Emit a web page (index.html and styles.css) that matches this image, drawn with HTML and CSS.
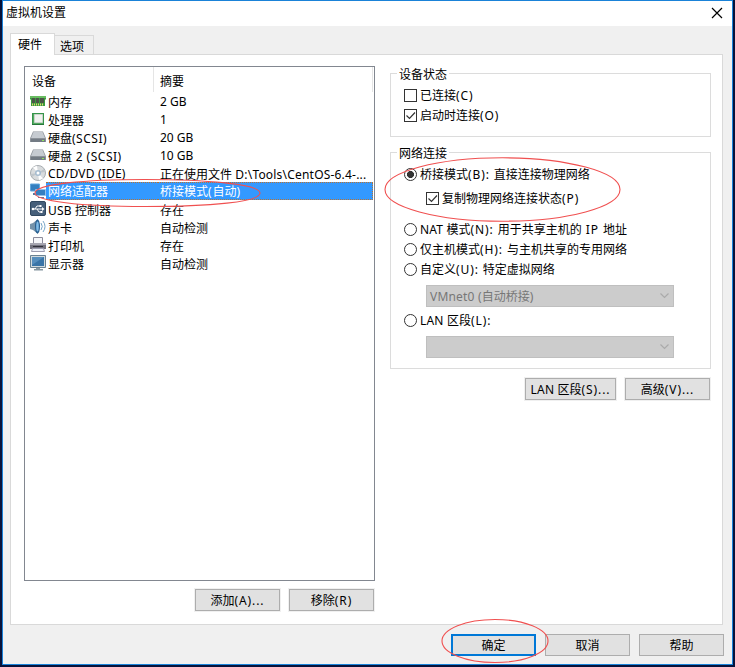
FILE: index.html
```html
<!DOCTYPE html>
<html lang="zh-CN">
<head>
<meta charset="utf-8">
<title>虚拟机设置</title>
<link rel="stylesheet" href="styles.css">
</head>
<body>
<div class="window">
  <header class="titlebar">
    <span class="title">虚拟机设置</span>
    <svg class="close" width="12" height="12" viewBox="0 0 12 12"><path d="M1 1l10 10M11 1L1 11" stroke="#000" stroke-width="1.2" fill="none"/></svg>
  </header>
  <nav class="tabs">
    <div class="tab active">硬件</div>
    <div class="tab">选项</div>
  </nav>
  <main class="panel">
    <section class="left">
      <div class="list">
        <div class="head"><span class="c1">设备</span><span class="c2">摘要</span></div>
        <div class="row">
          <svg class="ico" viewBox="0 0 16 16"><path d="M0 3h16v3l-1 1v6H1V7L0 6z" fill="#3a9a3e"/><path d="M0 3h16v2H0z" fill="#69bd61"/><path d="M2 5h3v5H2zM6 5h3v5H6zM10 5h4v5h-4z" fill="#4c5549"/><path d="M2 11.500h12" stroke="#e6d375" stroke-width="2" stroke-dasharray="1 1"/></svg>
          <span class="c1">内存</span><span class="c2 latin">2 GB</span></div>
        <div class="row">
          <svg class="ico" viewBox="0 0 16 16"><path d="M2 2h12v12H2z" fill="#35944a"/><path d="M3 3h10v10H3z" fill="#55aa63"/><path d="M4.500 3.500h8v8h-8z" fill="#f0f1f0" stroke="#c9d5ca"/><path d="M2 13.500h12" stroke="#27753a"/></svg>
          <span class="c1">处理器</span><span class="c2 latin">1</span></div>
        <div class="row">
          <svg class="ico" viewBox="0 0 16 16"><path d="M3 2.500h10l3 7v3.500H0V9.500z" fill="#8c9299"/><path d="M3.500 3h9L15 9H1z" fill="#c6cbd1"/><path d="M1 10h14v3H1z" fill="#737b84"/><path d="M12 11h2v1h-2z" fill="#8ee35b"/></svg>
          <span class="c1">硬盘<span class="en mid">(SCSI)</span></span><span class="c2 latin">20 GB</span></div>
        <div class="row">
          <svg class="ico" viewBox="0 0 16 16"><path d="M3 2.500h10l3 7v3.500H0V9.500z" fill="#8c9299"/><path d="M3.500 3h9L15 9H1z" fill="#c6cbd1"/><path d="M1 10h14v3H1z" fill="#737b84"/><path d="M12 11h2v1h-2z" fill="#8ee35b"/></svg>
          <span class="c1">硬盘<span class="en mid"> 2 (SCSI)</span></span><span class="c2 latin">10 GB</span></div>
        <div class="row">
          <svg class="ico" viewBox="0 0 16 16"><circle cx="8" cy="8" r="7.500" fill="#d9dcde" stroke="#a8adb1"/><path d="M8 8L3 2.500A7 7 0 0 1 7 1zM8 8l5 5.500A7 7 0 0 1 9 15z" fill="#fff"/><path d="M8 8l6-4a7 7 0 0 1 1 3zM8 8l-6 4a7 7 0 0 1-1-3z" fill="#bfc6cb"/><circle cx="8" cy="8" r="3" fill="#a5bcd0"/><circle cx="8" cy="8" r="1.500" fill="#fff"/></svg>
          <span class="c1 latin"><span class="en tight">CD/DVD (IDE)</span></span><span class="c2">正在使用文件<span class="en tight"> D:\Tools\CentOS-6.4-...</span></span></div>
        <div class="row selected">
          <svg class="ico" viewBox="0 0 16 16"><path d="M.5 1h9v7h-9z" fill="#347fc0" stroke="#62a7dc"/><path d="M3 10h5v2H3z" fill="#517ba5"/><path d="M5.500 6.500h10v6h-10z" fill="#347fc0" stroke="#94c2e8"/><path d="M8 14h6v1H8z" fill="#517ba5"/></svg>
          <span class="c1">网络适配器</span><span class="c2">桥接模式<span class="en">(</span>自动<span class="en">)</span></span></div>
        <div class="row">
          <svg class="ico" viewBox="0 0 16 16"><rect x=".5" y=".5" width="15" height="14" rx="1.500" fill="#465f7a" stroke="#30475f"/><path d="M3 8h10M5 8l2-3h3M7 8l2 3h2" stroke="#fff" fill="none"/><circle cx="3" cy="8" r="1.300" fill="#fff"/><path d="M9.500 4h2v2h-2zM10.500 10h2v2h-2zM12 6l2.500 2L12 10z" fill="#fff"/></svg>
          <span class="c1"><span class="en tight">USB </span>控制器</span><span class="c2">存在</span></div>
        <div class="row">
          <svg class="ico" viewBox="0 0 16 16"><path d="M0 5l3-1 5-4v15l-5-4-3-1z" fill="#7593aa"/><ellipse cx="7.500" cy="7.500" rx="2.500" ry="7" fill="#275f91"/><ellipse cx="7.500" cy="7.500" rx="1.300" ry="5" fill="#80bde8"/><path d="M11 4q2.500 3.500 0 7M13 2q4 5.500 0 11" fill="none" stroke="#76a6c8"/></svg>
          <span class="c1">声卡</span><span class="c2">自动检测</span></div>
        <div class="row">
          <svg class="ico" viewBox="0 0 16 16"><path d="M3.500.5h9V7h-9z" fill="#f6f7fa" stroke="#8c8c9b"/><path d="M0 6h16v6H0z" fill="#73737f"/><path d="M0 6h16v2H0z" fill="#a6a6b1"/><path d="M3 9h10v1H3z" fill="#30303b"/><path d="M2.500 11.500h11l1 3h-13z" fill="#eef2fa" stroke="#9c9caf"/></svg>
          <span class="c1">打印机</span><span class="c2">存在</span></div>
        <div class="row">
          <svg class="ico" viewBox="0 0 16 16"><path d="M.5.500h15v12H.5z" fill="#d2dadd" stroke="#6a8292"/><path d="M2 2h12v9H2z" fill="#3974a7"/><path d="M2 2h12L2 10z" fill="#568ebd"/><path d="M6 13h4v1H6z" fill="#8d9ca5"/><path d="M4 14h9v1.500H4z" fill="#8797a0"/></svg>
          <span class="c1">显示器</span><span class="c2">自动检测</span></div>
      </div>
      <div class="buttons"><button><span>添加<span class="en">(A)...</span></span></button><button><span>移除<span class="en">(R)</span></span></button></div>
    </section>
    <section class="right">
      <div class="group status">
        <span class="legend">设备状态</span>
        <label class="opt"><i class="box"></i><span>已连接<span class="en">(C)</span></span></label>
        <label class="opt"><i class="box"><svg viewBox="0 0 11 11"><path d="M1.500 5.500l3 3L10 2.500"/></svg></i><span>启动时连接<span class="en">(O)</span></span></label>
      </div>
      <div class="group network">
        <span class="legend">网络连接</span>
        <label class="opt"><i class="radio on"></i><span>桥接模式<span class="en">(B): </span>直接连接物理网络</span></label>
        <label class="opt nested"><i class="box"><svg viewBox="0 0 11 11"><path d="M1.500 5.500l3 3L10 2.500"/></svg></i><span>复制物理网络连接状态<span class="en">(P)</span></span></label>
        <label class="opt"><i class="radio"></i><span><span class="en tight">NAT </span>模式<span class="en">(N): </span>用于共享主机的<span class="en"> IP </span>地址</span></label>
        <label class="opt"><i class="radio"></i><span>仅主机模式<span class="en">(H): </span>与主机共享的专用网络</span></label>
        <label class="opt"><i class="radio"></i><span>自定义<span class="en">(U): </span>特定虚拟网络</span></label>
        <div class="select"><span><span class="en tight">VMnet0 (</span>自动桥接<span class="en">)</span></span><svg width="9" height="6" viewBox="0 0 9 6"><path d="M.5.500l4 4 4-4"/></svg></div>
        <label class="opt lan"><i class="radio"></i><span><span class="en tight">LAN </span>区段<span class="en">(L):</span></span></label>
        <div class="select"><span></span><svg width="9" height="6" viewBox="0 0 9 6"><path d="M.5.500l4 4 4-4"/></svg></div>
      </div>
      <div class="buttons"><button class="wide"><span><span class="en tight">LAN </span>区段<span class="en">(S)...</span></span></button><button><span>高级<span class="en">(V)...</span></span></button></div>
    </section>
  </main>
  <footer class="footer"><button class="primary"><span>确定</span></button><button><span>取消</span></button><button><span>帮助</span></button></footer>
</div>
<svg class="marks" width="735" height="667" viewBox="0 0 735 667">
  <path d="M35 193C35 184 85 179.500 145 179.500S260 184 260 193 210 206.500 145 206.500 35 201 35 193z"/>
  <ellipse cx="502.500" cy="189.500" rx="117.500" ry="31.700"/>
  <ellipse cx="495" cy="641" rx="53" ry="21.500"/>
</svg>
</body>
</html>
```

FILE: styles.css
```css
* { box-sizing: border-box; }
body {
  margin: 0;
  width: 735px;
  height: 667px;
  overflow: hidden;
  background: #07123a;
  padding: 0 2px 2px;
  font: 12px/18px "Noto Sans", "Noto Sans CJK SC", sans-serif;
  color: #000;
}
.en { letter-spacing: .9px; white-space: pre; }
.en.mid { letter-spacing: .5px; }
.en.tight { letter-spacing: .2px; }
.window {
  width: 731px;
  height: 665px;
  border: 1px solid #1a82d8;
  background: #f0f0f0;
  display: flex;
  flex-direction: column;
}
.titlebar {
  height: 25px;
  background: #fff;
  display: flex;
  align-items: center;
  justify-content: space-between;
  padding: 0 9px 0 3px;
}
.title { margin-top: -1px; }
.close { display: block; margin-top: -1px; }
.tabs {
  height: 28px;
  padding: 0 7px;
  display: flex;
  align-items: flex-end;
}
.tab {
  height: 19px;
  width: 39px;
  border: 1px solid #d9d9d9;
  border-width: 1px 1px 0 0;
  padding-left: 5px;
  line-height: 21px;
}
.tab.active {
  height: 22px;
  width: 45px;
  margin-bottom: -1px;
  border-left-width: 1px;
  background: #fff;
  padding-left: 7px;
  line-height: 22px;
  z-index: 1;
}
.panel {
  height: 571px;
  width: 713px;
  margin-left: 7px;
  border: 1px solid #d9d9d9;
  background: #fff;
  display: flex;
  gap: 15px;
  padding: 11px 11px 0 13px;
}
.left { width: 351px; }
.list {
  height: 515px;
  border: 1px solid #828790;
  padding: 0 1px;
}
.head {
  height: 25px;
  display: flex;
  line-height: 30px;
}
.head .c1 {
  width: 128px;
  padding-left: 6px;
  border-right: 1px solid #e5e5e5;
}
.head .c2 { flex: 1; padding-left: 6px; border-right: 1px solid #e5e5e5; }
.row {
  height: 18px;
  padding-left: 4px;
  display: flex;
  line-height: 21px;
  white-space: nowrap;
}
.row .latin { line-height: 19px; }
.ico { width: 16px; height: 16px; flex: none; margin-top: 1px; }
.row .c1 { width: 112px; padding-left: 2px; flex: none; }
.row .c2 { flex: 1; padding-left: 2px; }
.row.selected .c1, .row.selected .c2 {
  background: #3399ff;
  color: #fff;
  border: 1px dotted #b87333;
  border-width: 1px 0;
  line-height: 18px;
}
.row.selected .c2 { border-right-width: 1px; }
.buttons {
  display: flex;
  justify-content: flex-end;
  gap: 9px;
  margin-top: 8px;
}
.left .buttons { margin-right: 1px; }
button {
  width: 85px;
  height: 22px;
  padding: 2px 0 0;
  margin: 0;
  border: 1px solid #adadad;
  background: #e1e1e1;
  color: #000;
  font: inherit;
  line-height: 18px;
}
.left button, .right button { outline: 1px solid #f0f0f0; }
button.wide { width: 91px; }
.right { width: 321px; padding-top: 7px; }
.right .buttons { margin: 9px 1px 0 0; }
.group {
  border: 1px solid #dcdcdc;
  padding-left: 13px;
  display: flex;
  flex-direction: column;
  align-items: flex-start;
}
.legend {
  height: 18px;
  margin: -9px 0 2px -7px;
  padding: 0 2px;
  background: #fff;
  line-height: 20px;
}
.status { height: 64px; }
.network { height: 217px; margin-top: 15px; }
.opt {
  height: 20px;
  display: flex;
  align-items: center;
  gap: 3px;
  white-space: nowrap;
}
.opt > span { padding-top: 2px; }
.nested { margin: 4px 0 11px 22px; }
.box, .radio {
  width: 13px;
  height: 13px;
  border: 1px solid #333;
  background: #fff;
  flex: none;
}
.radio { border-radius: 50%; }
.radio.on { background: radial-gradient(circle, #333 0 3.2px, #fff 3.8px); }
.box svg { display: block; width: 11px; height: 11px; }
.box path { fill: none; stroke: #333; stroke-width: 1.2; }
.select {
  width: 248px;
  height: 22px;
  margin: 6px 0 0 22px;
  padding: 0 4px 0 3px;
  border: 1px solid #bfbfbf;
  background: #ccc;
  color: #777;
  display: flex;
  align-items: center;
  justify-content: space-between;
}
.select > span { padding-top: 2px; }
.select path { fill: none; stroke: #aaa; stroke-width: 1.2; }
.lan { margin-top: 3px; }
.footer {
  display: flex;
  justify-content: flex-end;
  gap: 9px;
  padding: 9px 8px 0 0;
}
.primary { border: 2px solid #0078d7; line-height: 16px; }
.marks { position: absolute; left: 0; top: 0; }
.marks path, .marks ellipse { fill: none; stroke: #f05050; stroke-width: 1.1; }
```
